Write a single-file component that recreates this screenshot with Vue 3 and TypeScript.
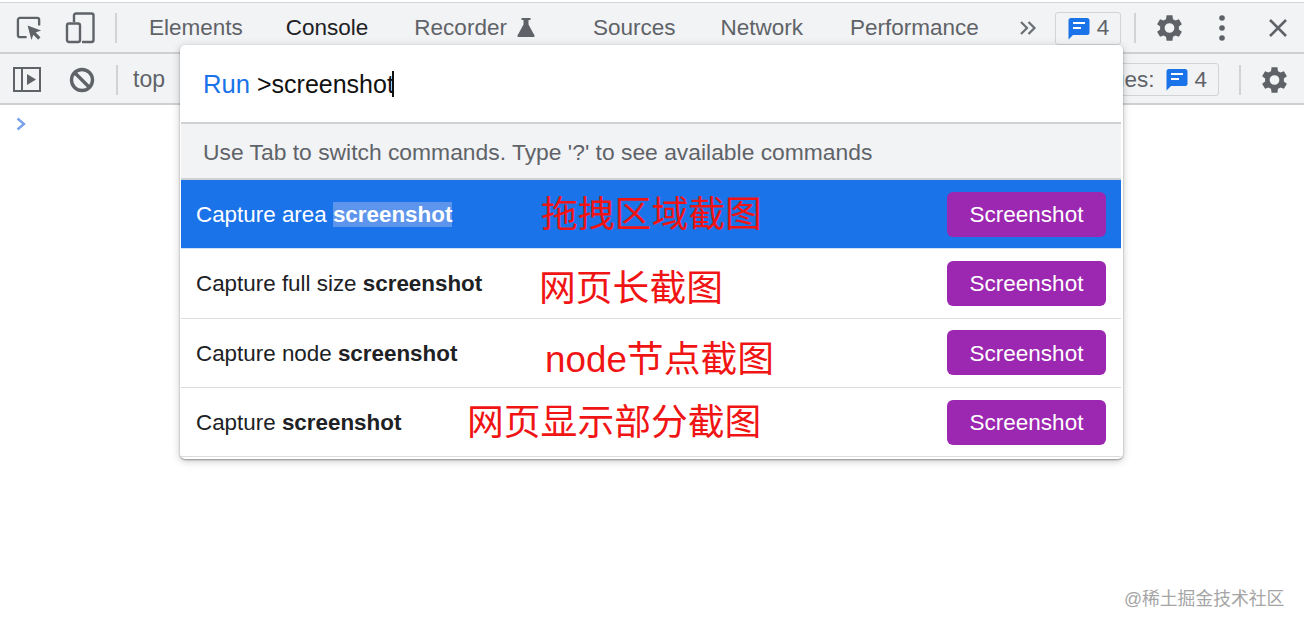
<script setup lang="ts">
interface Row {
  prefix: string
  label: string
  left: number
  top: number
  selected?: boolean
}
interface Tab {
  name: string
  after: number
}
const rows: Row[] = [
  { prefix: 'Capture area ', label: '拖拽区域截图', left: 360, top: 13, selected: true },
  { prefix: 'Capture full size ', label: '网页长截图', left: 358, top: 18 },
  { prefix: 'Capture node ', label: 'node节点截图', left: 364, top: 19 },
  { prefix: 'Capture ', label: '网页显示部分截图', left: 286, top: 13 },
]
const tabs: Tab[] = [
  { name: 'Elements', after: 21 },
  { name: 'Console', after: 24 },
  { name: 'Recorder', after: 36 },
  { name: 'Sources', after: 23 },
  { name: 'Network', after: 25 },
  { name: 'Performance', after: 22 },
]
</script>

<template>
  <div class="page">
    <div class="bar top">
      <svg class="ico" style="margin-left:16px" width="27" height="27" viewBox="0 0 28 28">
        <path d="M11 23H4a2 2 0 0 1-2-2V5a2 2 0 0 1 2-2h18a2 2 0 0 1 2 2v6" fill="none" stroke="#5f6368" stroke-width="2.400" />
        <path d="M12 11l14 5-5.600 2.200 5 5-2.400 2.400-5-5L16 26z" fill="#5f6368" />
      </svg>
      <svg class="ico" style="margin-left:22px" width="30" height="32" viewBox="0 0 30 32">
        <path d="M9 10V3.500A2 2 0 0 1 11 1.500h15.500a2 2 0 0 1 2 2V28a2 2 0 0 1-2 2H17" fill="none" stroke="#5f6368" stroke-width="2.400" />
        <rect x="2" y="11.500" width="13" height="18.500" rx="2" fill="none" stroke="#5f6368" stroke-width="2.400" />
      </svg>
      <span class="sep" style="margin-left:20px"></span>
      <div class="tabs">
        <span v-for="t in tabs" :key="t.name" class="tab" :class="{ on: t.name === 'Console' }" :style="{ paddingRight: t.after + 'px' }">{{ t.name }}<svg v-if="t.name === 'Recorder'" class="flask" width="18" height="20" viewBox="0 0 18 20"><path d="M4.500 1h9v2H11.500v4.500L17.500 18.500a1 1 0 0 1-1 1.500H1.500a1 1 0 0 1-1-1.500L6.500 7.500V3H4.500z" fill="#5f6368" /></svg></span>
      </div>
      <svg class="more" width="18" height="16" viewBox="0 0 18 16"><path d="M2 2l6 6-6 6M9.500 2l6 6-6 6" fill="none" stroke="#6b6f73" stroke-width="2.200" /></svg>
      <div class="badge first">
        <svg class="msg" width="22" height="23" viewBox="0 0 22 23"><path d="M3 1h16a2.500 2.500 0 0 1 2.500 2.500v12A2.500 2.500 0 0 1 19 18H5l-4.500 4.500V3.500A2.500 2.500 0 0 1 3 1z" fill="#1a73e8" /><path d="M5 6h12M5 11h8" stroke="#fff" stroke-width="2" /></svg>
        <span>4</span>
      </div>
      <span class="sep" style="margin-left:13px"></span>
      <svg class="gear" style="margin-left:20px" width="27" height="28" viewBox="3 2 19.400 20"><path d="M19.400 13a7.500 7.500 0 0 0 0-2l2.200-1.700-2.100-3.600-2.600 1a7.500 7.500 0 0 0-1.700-1L14.800 2.900h-4.200l-.4 2.800a7.500 7.500 0 0 0-1.700 1l-2.600-1-2.100 3.600L6 11a7.500 7.500 0 0 0 0 2l-2.200 1.700 2.100 3.600 2.600-1a7.500 7.500 0 0 0 1.700 1l.4 2.800h4.200l.4-2.800a7.500 7.500 0 0 0 1.700-1l2.600 1 2.100-3.600zM12.700 15.500a3.500 3.500 0 1 1 0-7 3.500 3.500 0 0 1 0 7z" fill="#5f6368" fill-rule="evenodd" /></svg>
      <svg style="margin-left:36px;flex:none" width="6" height="26" viewBox="0 0 6 26"><circle cx="3" cy="3" r="2.800" fill="#5f6368" /><circle cx="3" cy="13" r="2.800" fill="#5f6368" /><circle cx="3" cy="23" r="2.800" fill="#5f6368" /></svg>
      <svg style="margin-left:43px;flex:none" width="20" height="20" viewBox="0 0 20 20"><path d="M2 2l16 16M18 2L2 18" stroke="#5f6368" stroke-width="2.600" /></svg>
    </div>

    <div class="bar second">
      <svg style="margin-left:13px;flex:none" width="28" height="25" viewBox="0 0 28 25"><rect x="1" y="1" width="26" height="23" fill="none" stroke="#5f6368" stroke-width="2" /><path d="M9 1v23" stroke="#5f6368" stroke-width="2" /><path d="M14 7l9 5.500-9 5.500z" fill="#5f6368" /></svg>
      <svg style="margin-left:28px;flex:none" width="26" height="26" viewBox="0 0 26 26"><circle cx="13" cy="13" r="10.500" fill="none" stroke="#5f6368" stroke-width="3.400" /><path d="M5.500 5.500l15 15" stroke="#5f6368" stroke-width="3.400" /></svg>
      <span class="sep" style="margin-left:21px"></span>
      <span class="top-label">top</span>
      <span class="spacer"></span>
      <div class="badge issues">
        <span class="issues-text">Issues:</span>
        <svg class="msg" width="22" height="23" viewBox="0 0 22 23"><path d="M3 1h16a2.500 2.500 0 0 1 2.500 2.500v12A2.500 2.500 0 0 1 19 18H5l-4.500 4.500V3.500A2.500 2.500 0 0 1 3 1z" fill="#1a73e8" /><path d="M5 6h12M5 11h8" stroke="#fff" stroke-width="2" /></svg>
        <span>4</span>
      </div>
      <span class="sep" style="margin-left:20px"></span>
      <svg class="gear" style="margin-left:20px" width="27" height="28" viewBox="3 2 19.400 20"><path d="M19.400 13a7.500 7.500 0 0 0 0-2l2.200-1.700-2.100-3.600-2.600 1a7.500 7.500 0 0 0-1.700-1L14.800 2.900h-4.200l-.4 2.800a7.500 7.500 0 0 0-1.700 1l-2.600-1-2.100 3.600L6 11a7.500 7.500 0 0 0 0 2l-2.200 1.700 2.100 3.600 2.600-1a7.500 7.500 0 0 0 1.700 1l.4 2.800h4.200l.4-2.800a7.500 7.500 0 0 0 1.700-1l2.600 1 2.100-3.600zM12.700 15.500a3.500 3.500 0 1 1 0-7 3.500 3.500 0 0 1 0 7z" fill="#5f6368" fill-rule="evenodd" /></svg>
    </div>

    <div class="console">
      <svg class="prompt" width="10" height="14" viewBox="0 0 10 14"><path d="M1.500 1.500L8 7l-6.500 5.500" fill="none" stroke="#7aa1ea" stroke-width="2.400" /></svg>
    </div>

    <div class="palette">
      <div class="input">
        <span class="run">Run</span>
        <span class="query">&gt;screenshot</span>
        <span class="caret"></span>
      </div>
      <div class="hint">Use Tab to switch commands. Type '?' to see available commands</div>
      <div v-for="r in rows" :key="r.prefix" class="row" :class="{ sel: r.selected }">
        <span class="title">{{ r.prefix }}<b class="match">screenshot</b></span>
        <span class="note" :style="{ left: r.left + 'px', top: r.top + 'px' }">{{ r.label }}</span>
        <span class="btn">Screenshot</span>
      </div>
    </div>

    <div class="mark">@稀土掘金技术社区</div>
  </div>
</template>

<style scoped>
.page {
  position: relative;
  width: 1304px;
  height: 628px;
  overflow: hidden;
  background: #fff;
  font-family: "Liberation Sans", Arial, "Noto Sans CJK SC", sans-serif;
  color: #5f6368;
}
.bar {
  display: flex;
  align-items: center;
  background: #f2f3f5;
  box-sizing: content-box;
  border-bottom: 2px solid #cfd0d2;
}
.top {
  height: 48px;
  padding-top: 1px;
  margin-top: 2px;
  border-top: 1px solid #d4d5d6;
}
.second {
  height: 47px;
  padding-top: 2px;
  padding-right: 16px;
}
.sep {
  width: 2px;
  height: 30px;
  background: #d2d3d5;
  flex: none;
}
.ico, .gear, .more, .msg { flex: none; }
.tabs {
  display: flex;
  margin-left: 10px;
}
.tab {
  display: flex;
  align-items: center;
  padding-left: 22px;
  font-size: 22.500px;
  color: #5f6368;
  white-space: nowrap;
}
.tab.on { color: #202124; }
.flask { margin-left: 10px; margin-top: -3px; }
.more { margin-left: 18px; }
.badge {
  display: flex;
  align-items: center;
  box-sizing: border-box;
  height: 33px;
  border: 1.500px solid #d2d3d5;
  border-radius: 3px;
  font-size: 22.500px;
  color: #5f6368;
  flex: none;
}
.first {
  margin-left: 18px;
  width: 66px;
  padding-left: 12px;
  gap: 7px;
}
.issues {
  width: 130px;
  justify-content: flex-end;
  padding-right: 11px;
  gap: 6px;
}
.issues-text { margin-right: 6px; white-space: nowrap; }
.top-label {
  margin-left: 15px;
  font-size: 23px;
  color: #5f6368;
}
.spacer { flex: 1; }
.console { position: relative; }
.prompt {
  display: block;
  margin: 12px 0 0 16px;
}
.palette {
  position: absolute;
  left: 180px;
  top: 45px;
  width: 943px;
  height: 414px;
  padding: 0 2px 0 1px;
  box-sizing: border-box;
  background: #fff;
  border-radius: 5px;
  box-shadow: 0 1px 2px rgba(0, 0, 0, .35), 0 2px 8px rgba(0, 0, 0, .22);
  overflow: hidden;
}
.input {
  display: flex;
  align-items: center;
  height: 79px;
  padding-left: 22px;
  padding-top: 2px;
  box-sizing: border-box;
  border-bottom: 2px solid #cfd0d2;
}
.run {
  color: #1a73e8;
  font-size: 25.600px;
  margin-right: 7px;
}
.query {
  color: #111;
  font-size: 25px;
  margin-top: -1px;
}
.caret {
  width: 2px;
  height: 26px;
  background: #111;
  margin-left: -2px;
  margin-top: -2px;
}
.hint {
  display: flex;
  align-items: center;
  height: 56px;
  padding-left: 22px;
  padding-top: 2px;
  box-sizing: border-box;
  background: #f2f3f5;
  border-bottom: 2px solid #cfd0d2;
  font-size: 22.850px;
  color: #5f6368;
}
.row {
  position: relative;
  display: flex;
  align-items: center;
  justify-content: space-between;
  height: 69.300px;
  padding: 0 15px;
  box-sizing: border-box;
  border-bottom: 1.500px solid #dcdcdd;
  font-size: 22.400px;
  color: #202124;
}
.title { margin-top: 2px; }
.row.sel {
  background: #1a73e8;
  color: #fff;
  border-bottom-color: #cfe0f8;
}
.sel .match { background: #5e95ec; }
.note {
  position: absolute;
  font-size: 36.800px;
  line-height: 44px;
  color: #f01414;
  white-space: nowrap;
}
.btn {
  display: flex;
  align-items: center;
  justify-content: center;
  width: 159px;
  height: 45px;
  padding-top: 2px;
  box-sizing: border-box;
  border-radius: 6px;
  background: #9c27b0;
  color: #fff;
  font-size: 22.500px;
}
.mark {
  position: absolute;
  left: 1124px;
  top: 588px;
  font-size: 17.800px;
  line-height: 22px;
  color: #a5a5a5;
  white-space: nowrap;
}
</style>
